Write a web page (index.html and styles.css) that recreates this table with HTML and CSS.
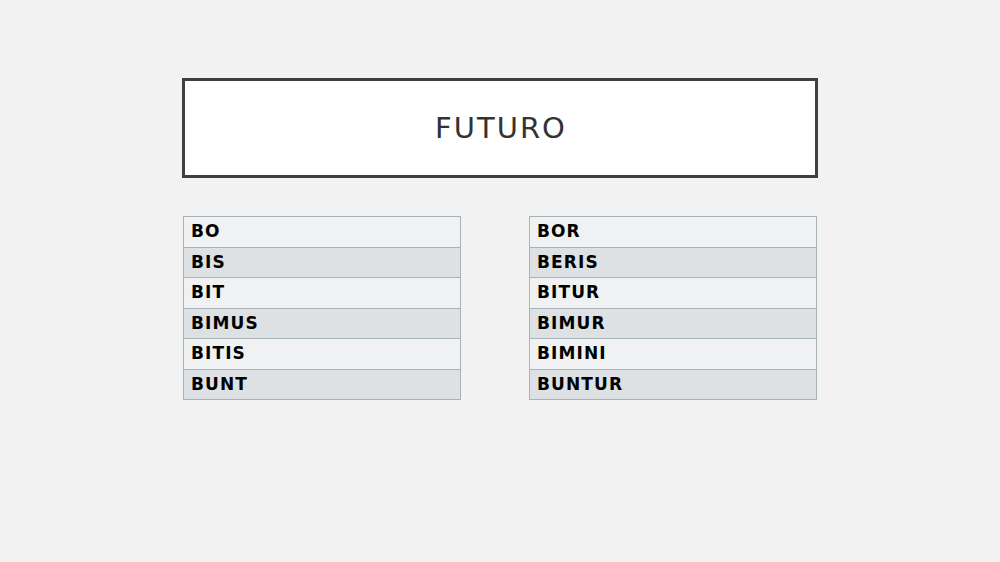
FILE: index.html
```html
<!DOCTYPE html>
<html>
<head>
<meta charset="utf-8">
<link rel="stylesheet" href="styles.css">
</head>
<body>
<div class="slide">
  <div class="title-box"><h1 class="title">FUTURO</h1></div>
  <div class="tables">
    <table class="conj conj-left">
      <tr><td>BO</td></tr>
      <tr><td>BIS</td></tr>
      <tr><td>BIT</td></tr>
      <tr><td>BIMUS</td></tr>
      <tr><td>BITIS</td></tr>
      <tr><td>BUNT</td></tr>
    </table>
    <table class="conj conj-right">
      <tr><td>BOR</td></tr>
      <tr><td>BERIS</td></tr>
      <tr><td>BITUR</td></tr>
      <tr><td>BIMUR</td></tr>
      <tr><td>BIMINI</td></tr>
      <tr><td>BUNTUR</td></tr>
    </table>
  </div>
</div>
</body>
</html>
```

FILE: styles.css
```css
html, body {
  margin: 0;
  padding: 0;
  background: #f2f2f2;
  width: 1000px;
  height: 562px;
  overflow: hidden;
}
.slide {
  padding: 78px 0 0 182px;
  font-family: "DejaVu Sans", sans-serif;
}
.title-box {
  box-sizing: border-box;
  width: 636px;
  height: 100px;
  border: 3px solid #404040;
  background: #ffffff;
  display: flex;
  align-items: center;
  justify-content: center;
}
.title {
  margin: 0;
  font-weight: normal;
  font-size: 29px;
  letter-spacing: 2px;
  color: #333333;
  padding-left: 2px;
}
.tables {
  display: flex;
  gap: 68px;
  margin-top: 38px;
  padding-left: 1px;
}
.conj {
  border-collapse: collapse;
}
.conj-left { width: 278px; }
.conj-right { width: 288px; }
.conj td {
  border: 1px solid #a7b3b6;
  height: 30.5px;
  padding: 0 0 1px 7px;
  font-weight: bold;
  font-size: 17px;
  letter-spacing: 1.1px;
  color: #000;
  background: #eff1f2;
  vertical-align: middle;
  box-sizing: border-box;
}
.conj tr:nth-child(even) td {
  background: #dde1e4;
}
```
